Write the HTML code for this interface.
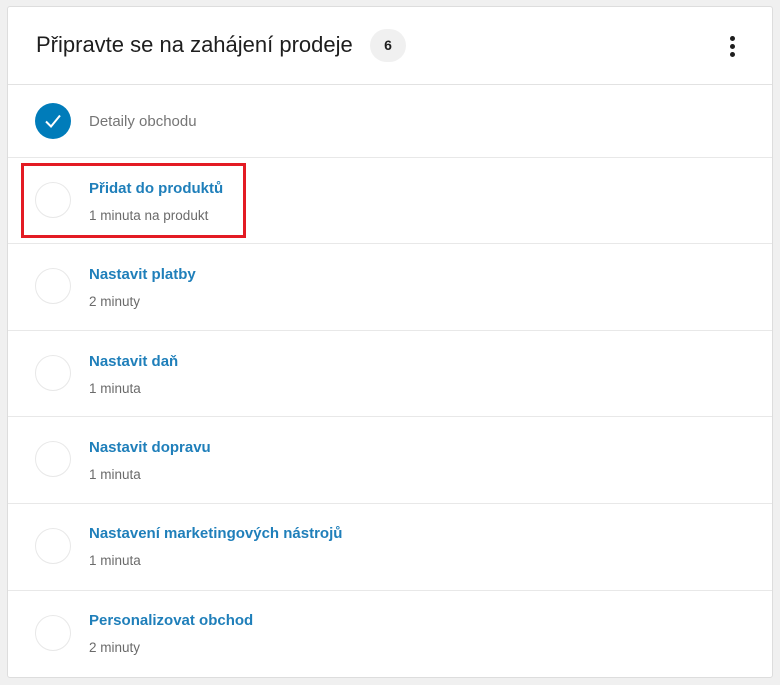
<!DOCTYPE html>
<html><head><meta charset="utf-8"><style>
body{margin:0;background:#f0f0f0;width:780px;height:685px;overflow:hidden;font-family:"Liberation Sans",sans-serif}
.card{position:absolute;left:7px;top:6px;width:766px;height:672px;background:#fff;border:1px solid #ddd;border-radius:3px;box-sizing:border-box}
.hdr{height:77px;border-bottom:1px solid #e2e2e2;position:relative}
.hdr h2{position:absolute;left:28px;top:25px;margin:0;font-weight:400;font-size:22px;color:#1e1e1e}
.badge{position:absolute;left:362px;top:22px;width:36px;height:33px;border-radius:17px;background:#f0f0f0;font-size:14px;font-weight:700;text-align:center;line-height:33px;color:#1e1e1e}
.dots{position:absolute;left:722px;top:29px}
.dots i{display:block;width:5px;height:5px;border-radius:50%;background:#1e1e1e;margin-bottom:3px}
.row{position:relative;border-bottom:1px solid #e8e8e8;box-sizing:border-box}
.circ{position:absolute;left:27px;width:36px;height:36px;border-radius:50%;border:1px solid #e8e8e8;box-sizing:border-box}
.t{position:absolute;left:81px;font-size:15px;font-weight:700;color:#1f7fba}
.s{position:absolute;left:81px;font-size:13.5px;color:#6b6b6b}
</style></head><body>
<div class="card">
<div class="hdr"><h2>Připravte se na zahájení prodeje</h2><div class="badge">6</div><div class="dots"><i></i><i></i><i></i></div></div>
<div class="row" style="height:73px">
<div class="circ" style="top:18px;background:#007cba;border:none"><svg width="36" height="36" viewBox="0 0 36 36"><path d="M11 18.5l5 5 9-11" fill="none" stroke="#fff" stroke-width="2"/></svg></div>
<div class="s" style="top:28px;font-size:15px;color:#757575">Detaily obchodu</div></div>
<div class="row" style="height:86px"><div class="circ" style="top:24px"></div><div class="t" style="top:22px">Přidat do produktů</div><div class="s" style="top:50px">1 minuta na produkt</div></div>
<div class="row" style="height:87px"><div class="circ" style="top:24px"></div><div class="t" style="top:22px">Nastavit platby</div><div class="s" style="top:50px">2 minuty</div></div>
<div class="row" style="height:86px"><div class="circ" style="top:24px"></div><div class="t" style="top:22px">Nastavit daň</div><div class="s" style="top:50px">1 minuta</div></div>
<div class="row" style="height:87px"><div class="circ" style="top:24px"></div><div class="t" style="top:22px">Nastavit dopravu</div><div class="s" style="top:50px">1 minuta</div></div>
<div class="row" style="height:87px"><div class="circ" style="top:24px"></div><div class="t" style="top:21px">Nastavení marketingových nástrojů</div><div class="s" style="top:49px">1 minuta</div></div>
<div class="row" style="height:86px;border:none"><div class="circ" style="top:24px"></div><div class="t" style="top:21px">Personalizovat obchod</div><div class="s" style="top:49px">2 minuty</div></div>
</div>
<div style="position:absolute;left:21px;top:163px;width:225px;height:75px;border:3px solid #e31b23;box-sizing:border-box"></div>
</body></html>
